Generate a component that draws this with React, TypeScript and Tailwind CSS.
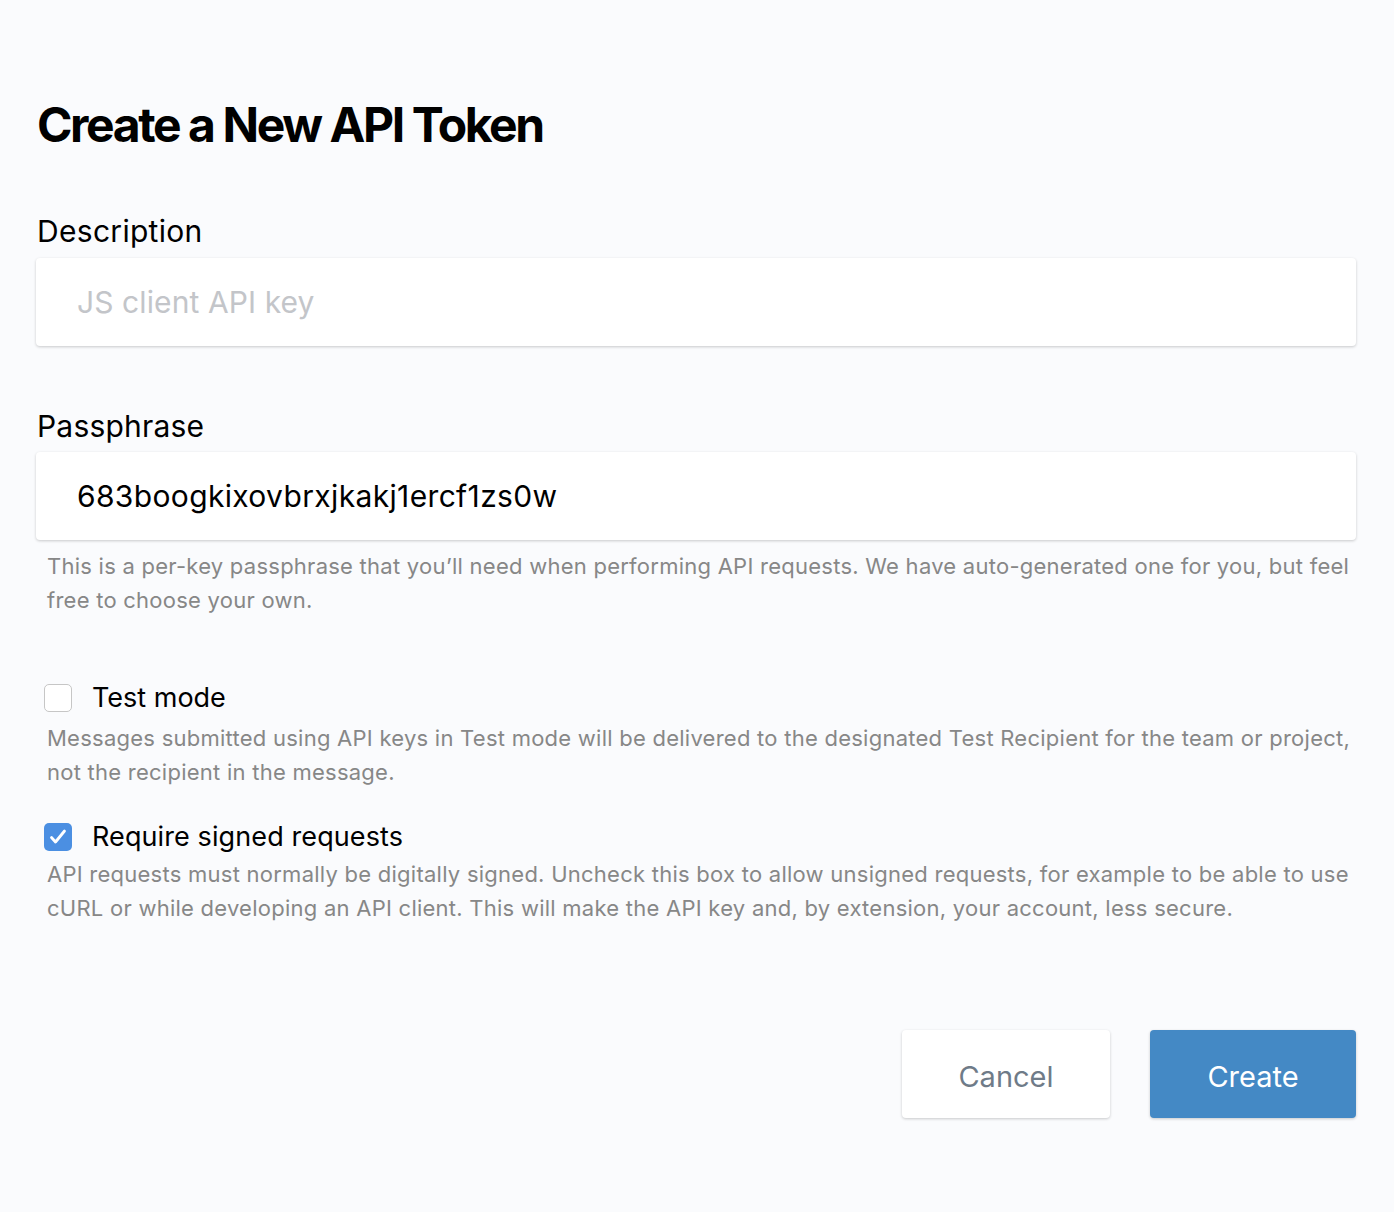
import React from "react";

const font = { fontFamily: "Inter, 'Noto Sans', sans-serif" };

function Check({ checked }: { checked: boolean }) {
  return checked ? (
    <div className="flex h-[28px] w-[28px] shrink-0 items-center justify-center rounded-[5px] bg-[#4b8fe2]">
      <svg width="28" height="28" viewBox="0 0 28 28" fill="none">
        <path d="M7.5 14.5l4 4.5L20.5 8" stroke="#fff" strokeWidth="2.8" strokeLinecap="round" strokeLinejoin="round" />
      </svg>
    </div>
  ) : (
    <div className="h-[28px] w-[28px] shrink-0 rounded-[5px] border border-[#c6c6c6] bg-white" />
  );
}

export default function App() {
  return (
    <div className="min-h-[1212px] bg-[#fafbfd] px-[36px] pt-[101px] text-black" style={font}>
      <h1 className="pl-[1px] text-[48px] font-bold leading-[48px] tracking-[-2.4px]">Create a New API Token</h1>

      <label className="mt-[67px] block pl-[1px] text-[30px] leading-[30px] tracking-[0.3px]">Description</label>
      <div className="mt-[12px] flex h-[88px] w-[1320px] items-center rounded-[4px] bg-white pl-[41px] shadow-[0_1px_3px_rgba(0,0,0,0.2)]">
        <span className="text-[30px] tracking-[0.1px] text-[#c3c5c9]">JS client API key</span>
      </div>

      <label className="mt-[65px] block pl-[1px] text-[30px] leading-[30px] tracking-[0.2px]">Passphrase</label>
      <div className="mt-[11px] flex h-[88px] w-[1320px] items-center rounded-[4px] bg-white pl-[41px] shadow-[0_1px_3px_rgba(0,0,0,0.2)]">
        <span className="text-[30px] tracking-[0.35px] text-black">683boogkixovbrxjkakj1ercf1zs0w</span>
      </div>
      <p className="mt-[9px] pl-[11px] text-[22px] leading-[34px] tracking-[0.25px] text-[#878787]">
        This is a per-key passphrase that you’ll need when performing API requests. We have auto-generated one for you, but feel free to choose your own.
      </p>

      <div className="mt-[67px] flex items-center gap-[20px] pl-[8px]">
        <Check checked={false} />
        <span className="text-[27px] leading-[28px]">Test mode</span>
      </div>
      <p className="mt-[9px] pl-[11px] text-[22px] leading-[34px] tracking-[0.25px] text-[#878787]">
        Messages submitted using API keys in Test mode will be delivered to the designated Test Recipient for the team or project, not the recipient in the message.
      </p>

      <div className="mt-[34px] flex items-center gap-[20px] pl-[8px]">
        <Check checked={true} />
        <span className="text-[27px] leading-[28px] tracking-[0.1px]">Require signed requests</span>
      </div>
      <p className="mt-[6px] pl-[11px] text-[22px] leading-[34px] tracking-[0.25px] text-[#878787]">
        API requests must normally be digitally signed. Uncheck this box to allow unsigned requests, for example to be able to use cURL or while developing an API client. This will make the API key and, by extension, your account, less secure.
      </p>

      <div className="mt-[105px] flex w-[1320px] justify-end gap-[40px]">
        <button className="h-[88px] w-[208px] rounded-[4px] bg-white pt-[6px] text-[29px] text-[#6f7b88] shadow-[0_1px_3px_rgba(0,0,0,0.2)]">Cancel</button>
        <button className="h-[88px] w-[206px] rounded-[4px] bg-[#4489c5] pt-[6px] text-[29px] text-white shadow-[0_1px_3px_rgba(0,0,0,0.2)]">Create</button>
      </div>
    </div>
  );
}
